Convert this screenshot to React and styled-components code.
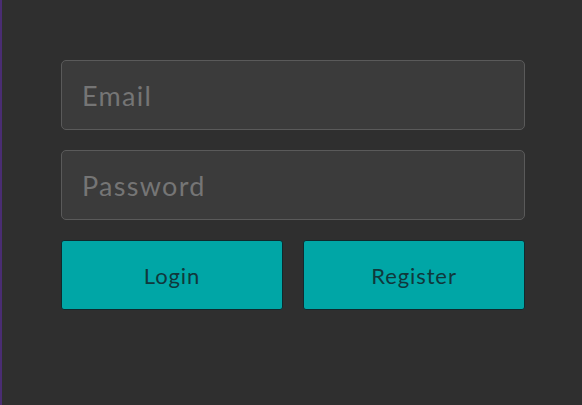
import React from 'react';
import styled, { createGlobalStyle } from 'styled-components';

const GlobalStyle = createGlobalStyle`
  html, body {
    margin: 0;
    padding: 0;
    background: #2f2f2f;
  }
  * {
    box-sizing: border-box;
  }
`;

const Page = styled.div`
  width: 582px;
  height: 405px;
  background: #2f2f2f;
  border-left: 2px solid #4a2d73;
  padding: 60px 0 0 59px;
  font-family: 'Century Gothic', 'Lato', 'DejaVu Sans', sans-serif;
`;

const Form = styled.form`
  width: 464px;
  display: flex;
  flex-direction: column;
  gap: 20px;
`;

const Input = styled.input`
  width: 100%;
  height: 70px;
  padding: 0 20px;
  background: #3b3b3b;
  border: 1px solid #5a5a5a;
  border-radius: 5px;
  font-family: inherit;
  font-size: 27px;
  letter-spacing: 1.3px;
  color: #ddd;
  outline: none;

  ::placeholder {
    color: #7b7b7b;
  }
`;

const Row = styled.div`
  display: flex;
  gap: 20px;
`;

const Button = styled.button`
  flex: 1;
  height: 70px;
  background: #00a6a6;
  border: 1px solid #0f2a2e;
  border-radius: 3px;
  font-family: inherit;
  font-size: 22px;
  letter-spacing: 0.9px;
  color: #10383c;
  cursor: pointer;
`;

export default function App() {
  return (
    <>
      <GlobalStyle />
      <Page>
        <Form onSubmit={(e) => e.preventDefault()}>
          <Input type="email" placeholder="Email" />
          <Input type="password" placeholder="Password" />
          <Row>
            <Button type="submit">Login</Button>
            <Button type="button">Register</Button>
          </Row>
        </Form>
      </Page>
    </>
  );
}
